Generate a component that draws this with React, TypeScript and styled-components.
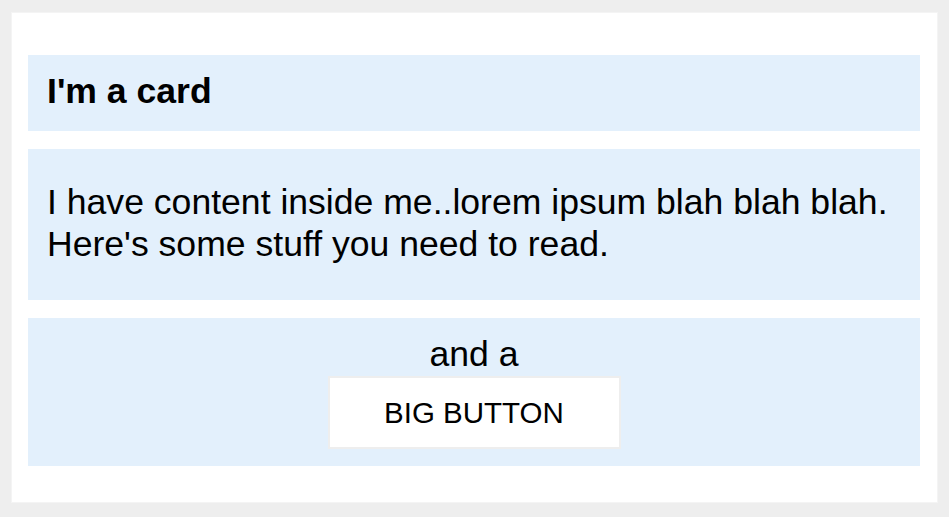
import React from 'react';
import styled, { createGlobalStyle } from 'styled-components';

const GlobalStyle = createGlobalStyle`
  html, body {
    margin: 0;
    padding: 0;
    background-color: #eeeeee;
    font-family: 'Liberation Sans', Arial, sans-serif;
    color: #000;
  }
`;

// Белая карточка-обёртка
const Card = styled.div`
  margin: 12px 11px 14px;
  padding: 42px 17px 36px 16px;
  background-color: #ffffff;
  border: 1px solid #f4f4f4;
  display: flex;
  flex-direction: column;
  gap: 18px;
`;

const Section = styled.div<{ $align?: 'left' | 'center' }>`
  background-color: #e3f0fc;
  padding: 0 17px 0 19px;
  font-size: 35.6px;
  text-align: ${(p) => p.$align || 'left'};
`;

const Header = styled(Section)`
  padding-top: 16px;
  padding-bottom: 19px;
  font-weight: bold;
  line-height: 41px;
`;

const Body = styled(Section)`
  padding-top: 33px;
  padding-bottom: 35px;
  line-height: 41.5px;
`;

const Footer = styled(Section)`
  padding: 16px 17px 17px;
  line-height: 41px;
  display: flex;
  flex-direction: column;
  align-items: center;
  gap: 1px;
`;

const BigButton = styled.button`
  width: 293px;
  height: 73px;
  background-color: #ffffff;
  border: 2px solid #eeeeee;
  font-family: 'Liberation Sans', Arial, sans-serif;
  font-size: 29.5px;
  color: #000;
  padding: 0;
  cursor: pointer;
`;

const App: React.FC = () => {
    return (
        <>
            <GlobalStyle />
            <Card>
                <Header>I'm a card</Header>
                <Body>
                    I have content inside me..lorem ipsum blah blah blah.
                    <br />
                    Here's some stuff you need to read.
                </Body>
                <Footer $align="center">
                    <span>and a</span>
                    <BigButton>BIG BUTTON</BigButton>
                </Footer>
            </Card>
        </>
    );
};

export default App;
